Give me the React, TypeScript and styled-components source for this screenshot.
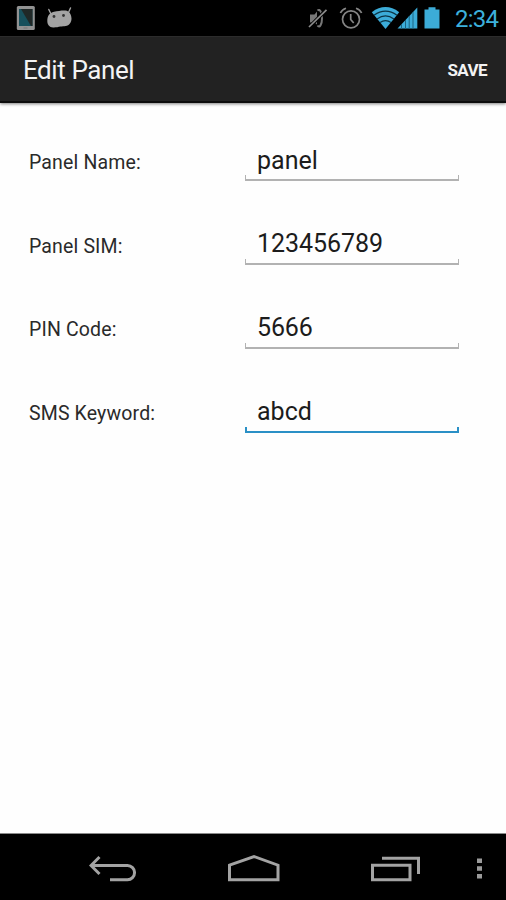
import React from "react";
import styled, { createGlobalStyle } from "styled-components";

const GlobalStyle = createGlobalStyle`
  * { box-sizing: border-box; }
  body { margin: 0; background: #fff; font-family: Roboto, "Noto Sans", sans-serif; }
`;

const Screen = styled.div`
  display: flex;
  flex-direction: column;
  width: 506px;
  height: 900px;
  overflow: hidden;
  background: #fefefe;
`;

const StatusBar = styled.header`
  display: flex;
  align-items: center;
  height: 36px;
  padding: 0 8px 0 16px;
  background: #000;
  svg { display: block; flex: none; }
`;

const Notifications = styled.div`
  display: flex;
  align-items: center;
  gap: 12px;
`;

const Indicators = styled.div`
  display: flex;
  align-items: center;
  margin-left: auto;
`;

const Clock = styled.time`
  width: 43px;
  margin-left: 15px;
  color: #3cb0dc;
  font-size: 24px;
  line-height: 36px;
  letter-spacing: -0.75px;
  white-space: nowrap;
  padding-top: 1px;
`;

const ActionBar = styled.div`
  display: flex;
  align-items: center;
  justify-content: space-between;
  flex: none;
  height: 67px;
  padding: 0 19px 0 23px;
  color: #f3f3f3;
  background: #222;
  border-top: 1px solid #2c2c2c;
  border-bottom: 2px solid #0c0c0c;
  box-shadow: 0 1px 3px rgba(0, 0, 0, 0.5);
`;

const Title = styled.h1`
  margin: 2px 0 0;
  font-size: 26px;
  font-weight: 400;
  letter-spacing: -0.42px;
`;

const SaveButton = styled.button`
  margin: 2px 0 0;
  padding: 0;
  border: 0;
  background: none;
  color: #f3f3f3;
  font: 700 17px Roboto, sans-serif;
  letter-spacing: -0.6px;
`;

const Form = styled.form`
  flex: 1;
  padding: 35.2px 47px 0 29px;
`;

const Row = styled.div`
  display: grid;
  grid-template-columns: 216px 214px;
  height: 83.67px;
`;

const Label = styled.label`
  padding-top: 12.8px;
  color: #2a2a2a;
  font-size: 19.5px;
  line-height: 24px;
  letter-spacing: 0.15px;
`;

const Field = styled.div<{ $active?: boolean }>`
  --line: ${(p) => (p.$active ? "#2a90c6" : "#b2b2b2")};
  display: flex;
  height: ${(p) => (p.$active ? 44 : 43)}px;
  padding-left: 12px;
  background:
    linear-gradient(var(--line), var(--line)) left bottom / ${(p) => (p.$active ? 2 : 1)}px 6px no-repeat,
    linear-gradient(var(--line), var(--line)) right bottom / ${(p) => (p.$active ? 2 : 1)}px 6px no-repeat,
    linear-gradient(var(--line), var(--line)) left bottom / 100% 2px no-repeat;
`;

const Input = styled.input<{ $spacing: number }>`
  width: 100%;
  height: 30px;
  margin-top: 7px;
  padding: 0;
  border: 0;
  outline: 0;
  background: none;
  color: #1c1c1c;
  font: 400 25px Roboto, sans-serif;
  letter-spacing: ${(p) => p.$spacing}px;
`;

const NavBar = styled.nav`
  display: grid;
  grid-template-columns: 42px 142px 140px 144px 23px;
  align-items: center;
  justify-items: center;
  flex: none;
  height: 67px;
  padding-top: 5px;
  background: #000;
  border-top: 1px solid #8a8a8a;
`;

const NavButton = styled.button`
  display: block;
  padding: 0;
  border: 0;
  background: none;
  svg { display: block; }
`;

const DeviceIcon = () => (
  <svg width="19" height="26" viewBox="0 0 19 26">
    <rect x="0.8" y="1" width="18" height="24" rx="1.5" fill="#929292" />
    <rect x="3" y="4" width="13.5" height="17" fill="#17505c" />
    <path d="M5 4H16.5V21H15Z" fill="#202827" />
    <path d="M7.5 23h4" stroke="#777" />
  </svg>
);

const AndroidIcon = () => (
  <svg width="26" height="22" viewBox="0 0 26 22">
    <path d="M1.8 2.5 4 7M23.5 1 21.5 5.500" stroke="#a3a3a3" strokeWidth="1.4" strokeLinecap="round" />
    <path d="M.3 14C.3 9 2.500 5.800 7 4.800c4-.8 8-1.600 11.500-1.300 3.900.5 6 4.300 6 8.100 0 4-2.300 7-5.800 7.400-2 .2-3.400.3-5.200.6-2.400.5-4.500 1-7.400.9C2.300 20.300.3 17.500.3 14Z" fill="#a3a3a3" />
    <circle cx="7" cy="9.500" r="1.4" fill="#333" />
    <circle cx="16.500" cy="8.500" r="1.4" fill="#333" />
  </svg>
);

const MuteIcon = () => (
  <svg width="20" height="22" viewBox="0 0 20 22">
    <path d="M2 6.500h4.500L9 3.500v13L6.500 14.500H2z" fill="#777" />
    <path d="M9.500 2.500c2.500-2 4.500 2 4.500 8s-2.500 10-4.500 7" fill="none" stroke="#777" strokeWidth="2" />
    <path d="M1 19.500 18.500 1.500" stroke="#000" strokeWidth="3.600" />
    <path d="M1 19 18.500 1.800" stroke="#8c8c8c" strokeWidth="1.7" />
  </svg>
);

const AlarmIcon = () => (
  <svg width="24" height="24" viewBox="0 0 24 24" fill="none" stroke="#858585" strokeWidth="1.7">
    <circle cx="12" cy="13.3" r="8.5" />
    <path d="M11.7 8v5.5l3 3.5" />
    <path d="M1.4 7Q3 3.400 7 2.200M22.600 7Q21 3.400 17 2.200" />
  </svg>
);

const WifiIcon = () => (
  <svg width="29" height="24" viewBox="0 0 29 24">
    <path d="M.8 6.200Q14.500-4 28.200 6.200L14.500 23Z" fill="#3cacd8" />
    <path d="M3 9.200Q14.500 1.200 26 9.200M6 12.900Q14.500 7 23 12.900M9 16.600Q14.500 12.700 20 16.600" fill="none" stroke="#0b3445" strokeWidth="1.2" />
  </svg>
);

const SignalIcon = () => (
  <svg width="21" height="24" viewBox="0 0 21 24">
    <path d="M.5 22.500 20.300 1.500v21Z" fill="#3cacd8" />
    <path d="M4.500 18v5M8.500 14v9M12.200 10v13M16 6v17" stroke="#1b6482" strokeWidth="1" />
  </svg>
);

const BatteryIcon = () => (
  <svg width="16" height="24" viewBox="0 0 16 24">
    <path d="M4.500 1.300h7v2.200h4v19H.5v-19h4Z" fill="#3cacd8" />
  </svg>
);

const BackIcon = () => (
  <svg width="48" height="32" viewBox="0 0 48 32" fill="none" stroke="#a3a3a3" strokeWidth="3">
    <path d="M10.500 3 2 11.500 10.500 20M2.500 11.500H38.500a7 7 0 0 1 0 14.200H21" />
  </svg>
);

const HomeIcon = () => (
  <svg width="54" height="32" viewBox="0 0 54 32" fill="none" stroke="#a3a3a3" strokeWidth="3">
    <path d="M2.500 11.200 27 2.500l24 8.700v14.500H2.500Z" />
  </svg>
);

const RecentIcon = () => (
  <svg width="50" height="32" viewBox="0 0 50 32" fill="none" stroke="#a3a3a3" strokeWidth="3">
    <path d="M1.500 11.200H39V25.700H1.500ZM11 4.200H47.500V20" />
  </svg>
);

const MenuIcon = () => (
  <svg width="6" height="32" viewBox="0 0 6 32" fill="#9b9b9b">
    <path d="M0 4.500h5v4.500h-5zM0 12.300h5v4.500h-5zM0 20h5V24.500h-5z" />
  </svg>
);

const IconSlot = styled.div<{ $left?: number; $top?: number }>`
  margin: ${(p) => p.$top ?? 0}px 0 0 ${(p) => p.$left ?? 0}px;
`;

const fields = [
  { id: "name", label: "Panel Name:", value: "panel", spacing: 0 },
  { id: "sim", label: "Panel SIM:", value: "123456789", spacing: -0.05 },
  { id: "pin", label: "PIN Code:", value: "5666", spacing: -0.15 },
  { id: "keyword", label: "SMS Keyword:", value: "abcd", spacing: 0, active: true },
];

export default function App() {
  return (
    <Screen>
      <GlobalStyle />
      <StatusBar>
        <Notifications>
          <DeviceIcon />
          <AndroidIcon />
        </Notifications>
        <Indicators>
          <IconSlot $top={2}><MuteIcon /></IconSlot>
          <IconSlot $left={11}><AlarmIcon /></IconSlot>
          <IconSlot $left={8}><WifiIcon /></IconSlot>
          <IconSlot $left={-3}><SignalIcon /></IconSlot>
          <IconSlot $left={6}><BatteryIcon /></IconSlot>
        </Indicators>
        <Clock>2:34</Clock>
      </StatusBar>
      <ActionBar>
        <Title>Edit Panel</Title>
        <SaveButton type="button">SAVE</SaveButton>
      </ActionBar>
      <Form>
        {fields.map((f) => (
          <Row key={f.id}>
            <Label htmlFor={f.id}>{f.label}</Label>
            <Field $active={f.active}>
              <Input id={f.id} defaultValue={f.value} $spacing={f.spacing} spellCheck={false} />
            </Field>
          </Row>
        ))}
      </Form>
      <NavBar>
        <span />
        <NavButton aria-label="Back"><BackIcon /></NavButton>
        <NavButton aria-label="Home"><HomeIcon /></NavButton>
        <NavButton aria-label="Recent apps"><RecentIcon /></NavButton>
        <NavButton aria-label="Menu"><MenuIcon /></NavButton>
      </NavBar>
    </Screen>
  );
}
